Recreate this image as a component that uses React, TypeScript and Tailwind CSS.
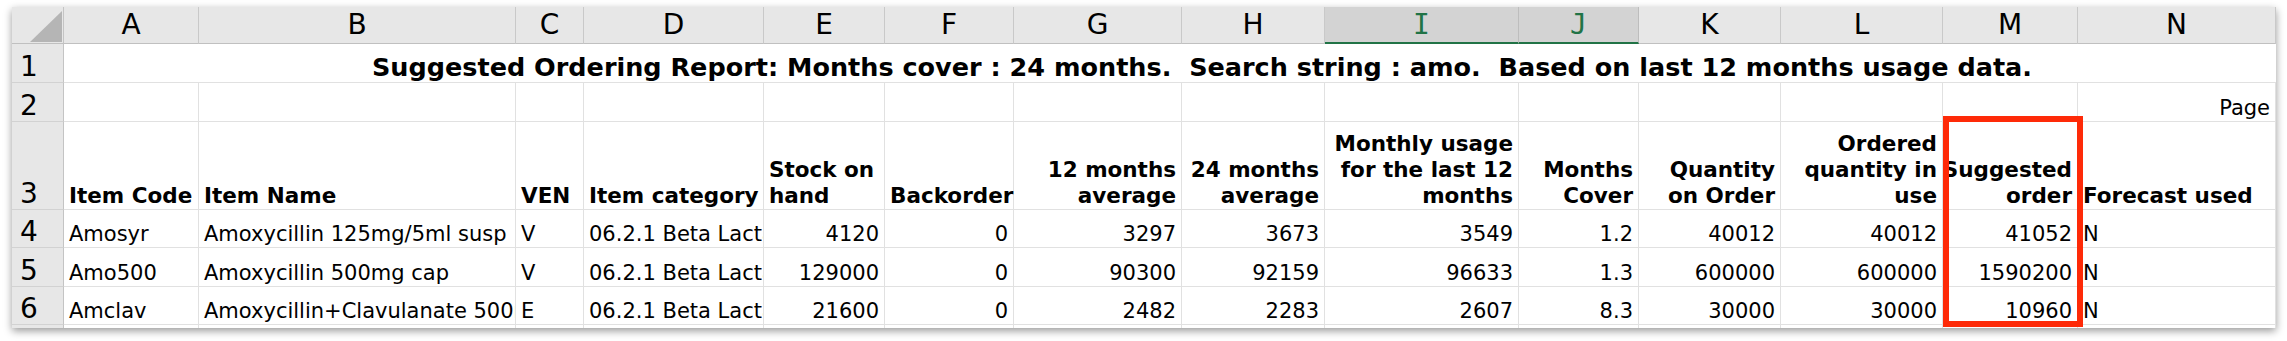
import React from "react";

const LETTERS = ["A", "B", "C", "D", "E", "F", "G", "H", "I", "J", "K", "L", "M", "N"];

type Align = "l" | "r";

const HEAD: { lines: string[]; a: Align }[] = [
  { lines: ["Item Code"], a: "l" },
  { lines: ["Item Name"], a: "l" },
  { lines: ["VEN"], a: "l" },
  { lines: ["Item category"], a: "l" },
  { lines: ["Stock on", "hand"], a: "l" },
  { lines: ["Backorder"], a: "l" },
  { lines: ["12 months", "average"], a: "r" },
  { lines: ["24 months", "average"], a: "r" },
  { lines: ["Monthly usage", "for the last 12", "months"], a: "r" },
  { lines: ["Months", "Cover"], a: "r" },
  { lines: ["Quantity", "on Order"], a: "r" },
  { lines: ["Ordered", "quantity in", "use"], a: "r" },
  { lines: ["Suggested", "order"], a: "r" },
  { lines: ["Forecast used"], a: "l" },
];

const ALIGN: Align[] = ["l", "l", "l", "l", "r", "r", "r", "r", "r", "r", "r", "r", "r", "l"];

const DATA: string[][] = [
  ["Amosyr", "Amoxycillin 125mg/5ml susp", "V", "06.2.1 Beta Lactam antibiotics", "4120", "0", "3297", "3673", "3549", "1.2", "40012", "40012", "41052", "N"],
  ["Amo500", "Amoxycillin 500mg cap", "V", "06.2.1 Beta Lactam antibiotics", "129000", "0", "90300", "92159", "96633", "1.3", "600000", "600000", "1590200", "N"],
  ["Amclav", "Amoxycillin+Clavulanate 500mg/125mg tab", "E", "06.2.1 Beta Lactam antibiotics", "21600", "0", "2482", "2283", "2607", "8.3", "30000", "30000", "10960", "N"],
];

const cellBase =
  "flex items-end overflow-hidden whitespace-nowrap border-r border-b border-[#e1e1e1] px-[5px] leading-[26px]";

function RowHead({ n }: { n?: string }) {
  return (
    <div className="flex items-end overflow-hidden bg-[#e7e7e7] border-r border-r-[#c4c4c4] border-b border-b-[#d2d2d2] pl-[8px] text-[28px] leading-[30px] text-black">
      {n}
    </div>
  );
}

export default function App() {
  return (
    <div className="w-[2287px] h-[341px] overflow-hidden bg-white pt-[7px] pl-[12px] font-['DejaVu_Sans',sans-serif] text-black">
      <div className="relative w-[2264px] h-[321px] overflow-hidden bg-white shadow-[0_3px_8px_rgba(0,0,0,0.4)]">
        <div className="grid grid-cols-[52px_135px_317px_68px_180px_121px_129px_168px_143px_194px_120px_142px_162px_135px_198px] grid-rows-[37px_39px_39px_88px_38px_39px_38px_3px]">
          {/* corner */}
          <div className="bg-[#e7e7e7] border-r border-r-[#c4c4c4] border-b border-b-[#c0c0c0]">
            <svg width="51" height="36" viewBox="0 0 51 36">
              <polygon points="50,4 50,35 18,35" fill="#b5b5b5" />
            </svg>
          </div>
          {/* column headers */}
          {LETTERS.map((l) => {
            const sel = l === "I" || l === "J";
            return (
              <div
                key={l}
                className={
                  sel
                    ? "flex items-end justify-center bg-[#d3d3d3] border-r border-r-[#bdbdbd] border-b-2 border-b-[#217346] text-[#217346] text-[28px] leading-[30px] pb-[2px] font-['DejaVu_Sans_Mono',monospace]"
                    : "flex items-end justify-center bg-[#e7e7e7] border-r border-r-[#c9c9c9] border-b border-b-[#c0c0c0] text-[28px] leading-[30px] pb-[3px]"
                }
              >
                {l}
              </div>
            );
          })}

          {/* row 1 */}
          <RowHead n="1" />
          <div className="col-span-14 flex items-end justify-center border-b border-[#e1e1e1] pl-[64px] text-[25.5px] leading-[30px] font-bold whitespace-pre">
            {"Suggested Ordering Report: Months cover : 24 months.  Search string : amo.  Based on last 12 months usage data."}
          </div>

          {/* row 2 */}
          <RowHead n="2" />
          {LETTERS.map((l) => (
            <div key={l} className={cellBase + (l === "N" ? " justify-end text-[21px]" : "")}>
              {l === "N" ? "Page" : ""}
            </div>
          ))}

          {/* row 3 */}
          <RowHead n="3" />
          {HEAD.map((h, i) => (
            <div
              key={i}
              className={
                "flex items-end whitespace-nowrap border-r border-b border-[#e1e1e1] px-[5px] leading-[26px] text-[21.5px] font-bold " +
                (h.a === "r" ? "justify-end text-right" : "justify-start text-left")
              }
            >
              <div>
                {h.lines.map((t, j) => (
                  <div key={j}>{t}</div>
                ))}
              </div>
            </div>
          ))}

          {/* data rows */}
          {DATA.map((row, r) => (
            <React.Fragment key={r}>
              <RowHead n={String(r + 4)} />
              {row.map((v, c) => (
                <div
                  key={c}
                  className={cellBase + " text-[21px] " + (ALIGN[c] === "r" ? "justify-end" : "justify-start")}
                >
                  {v}
                </div>
              ))}
            </React.Fragment>
          ))}

          {/* partial row 7 */}
          <div className="bg-[#e7e7e7] border-r border-r-[#c4c4c4]" />
          {LETTERS.map((l) => (
            <div key={l} className="border-r border-[#e1e1e1]" />
          ))}
        </div>

        {/* highlight box */}
        <div className="absolute left-[1931px] top-[109px] w-[140px] h-[211px] border-[6px] border-[#fe2a08]" />
      </div>
    </div>
  );
}
